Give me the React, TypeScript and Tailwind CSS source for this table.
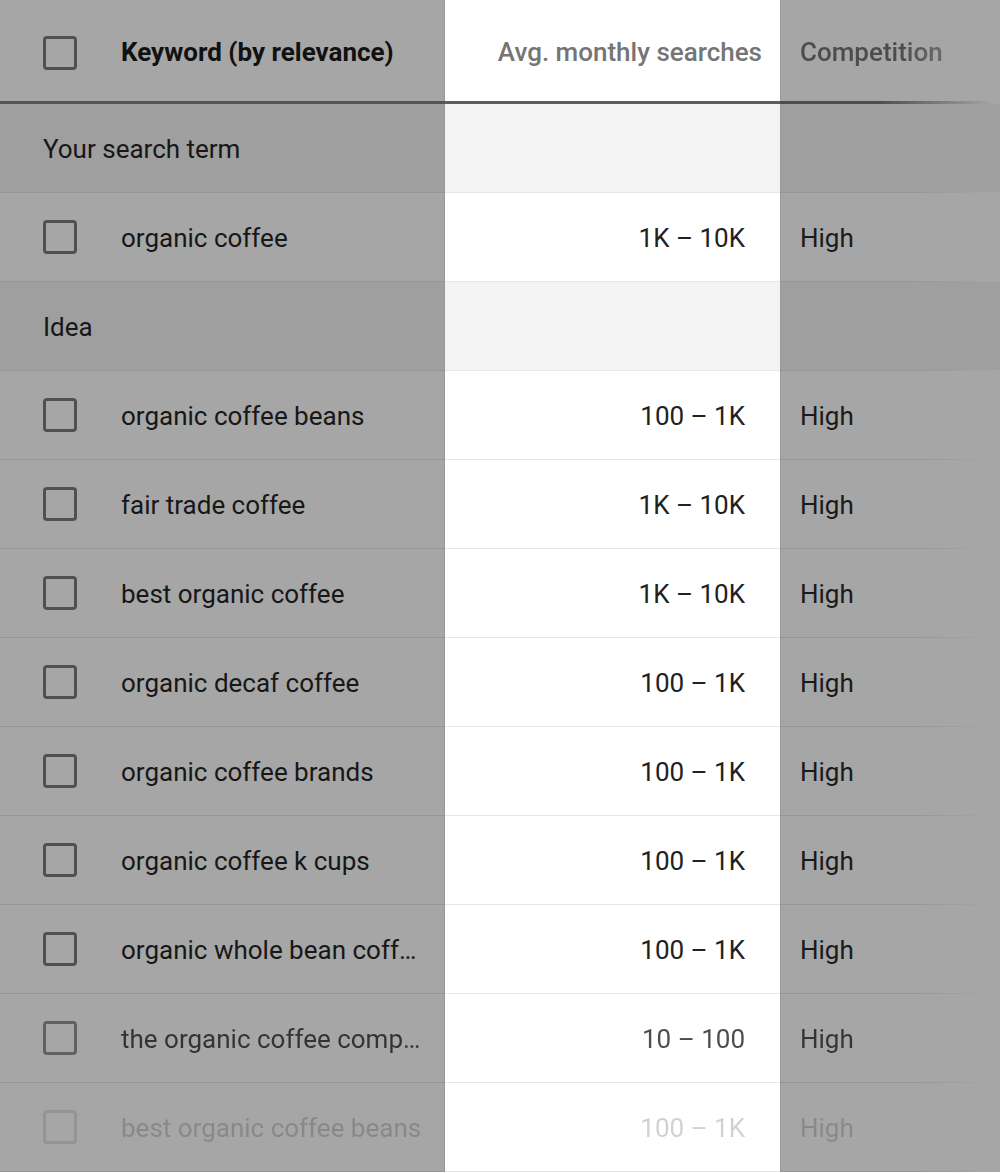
const rows: { keyword: string; searches: string; fade?: string }[] = [
  { keyword: "organic coffee beans", searches: "100 – 1K" },
  { keyword: "fair trade coffee", searches: "1K – 10K" },
  { keyword: "best organic coffee", searches: "1K – 10K" },
  { keyword: "organic decaf coffee", searches: "100 – 1K" },
  { keyword: "organic coffee brands", searches: "100 – 1K" },
  { keyword: "organic coffee k cups", searches: "100 – 1K" },
  { keyword: "organic whole bean coff…", searches: "100 – 1K" },
  { keyword: "the organic coffee comp…", searches: "10 – 100", fade: "opacity-80" },
  { keyword: "best organic coffee beans", searches: "100 – 1K", fade: "opacity-20" },
];

function Checkbox() {
  return <div className="h-[34px] w-[34px] shrink-0 rounded-[4px] border-[3px] border-[#505050]" />;
}

function RightCell({ children, section }: { children?: React.ReactNode; section?: boolean }) {
  return (
    <div className={`flex flex-1 flex-col border-l border-[#999] ${section ? "bg-[#9f9f9f]" : "bg-[#a6a6a6]"}`}>
      <div className="flex flex-1 items-center pl-[19px]">{children}</div>
      <div className="h-px bg-[linear-gradient(to_right,#969696_60%,#a6a6a6_97%)]" />
    </div>
  );
}

function SectionRow({ label }: { label: string }) {
  return (
    <div className="flex h-[89px]">
      <div className="flex w-[445px] items-center border-b border-r border-[#969696] bg-[#9f9f9f] pl-[43px] pt-[2px] text-[26px] text-[#171717]">
        {label}
      </div>
      <div className="w-[335px] border-b border-[#e6e6e6] bg-[#f4f4f4]" />
      <RightCell section />
    </div>
  );
}

function KeywordRow({ keyword, searches, fade = "" }: { keyword: string; searches: string; fade?: string }) {
  return (
    <div className="flex h-[89px]">
      <div className="flex w-[445px] items-center overflow-hidden border-b border-r border-[#969696] bg-[#a6a6a6] pl-[43px]">
        <div className={`flex items-center ${fade}`}>
          <Checkbox />
          <span className="ml-[44px] whitespace-nowrap pt-[2px] text-[26px] text-[#171717]">{keyword}</span>
        </div>
      </div>
      <div className="flex w-[335px] items-center justify-end border-b border-[#e6e6e6] bg-white pr-[35px] pt-[2px]">
        <span className={`text-[26px] text-[#212121] ${fade}`}>{searches}</span>
      </div>
      <RightCell>
        <span className={`pt-[2px] text-[26px] text-[#1a1a1a] ${fade}`}>High</span>
      </RightCell>
    </div>
  );
}

export default function App() {
  return (
    <div className="h-[1173px] w-[1000px] overflow-hidden bg-white font-['Roboto',sans-serif]">
      <div className="flex h-[101px]">
        <div className="flex w-[445px] items-center border-r border-[#999] bg-[#a6a6a6] pl-[43px] pt-[4px]">
          <Checkbox />
          <span className="ml-[44px] text-[26px] font-bold text-[#111]">Keyword (by relevance)</span>
        </div>
        <div className="flex w-[335px] items-center justify-end bg-white pr-[18px] pt-[4px]">
          <span className="text-[26px] font-medium text-[#757575]">Avg. monthly searches</span>
        </div>
        <div className="flex flex-1 items-center border-l border-[#999] bg-[#a6a6a6] pl-[19px] pt-[4px]">
          <span className="bg-[linear-gradient(to_right,#4c4c4c_70%,#6a6a6a)] bg-clip-text text-[26px] font-medium text-transparent">
            Competition
          </span>
        </div>
      </div>
      <div className="flex h-[3px]">
        <div className="w-[445px] bg-[#565656]" />
        <div className="w-[335px] bg-[#5e5e5e]" />
        <div className="flex-1 bg-[linear-gradient(to_right,#4e4e4e_45%,#a6a6a6_98%)]" />
      </div>
      <SectionRow label="Your search term" />
      <KeywordRow keyword="organic coffee" searches="1K – 10K" />
      <SectionRow label="Idea" />
      {rows.map((r) => (
        <KeywordRow key={r.keyword} {...r} />
      ))}
    </div>
  );
}
